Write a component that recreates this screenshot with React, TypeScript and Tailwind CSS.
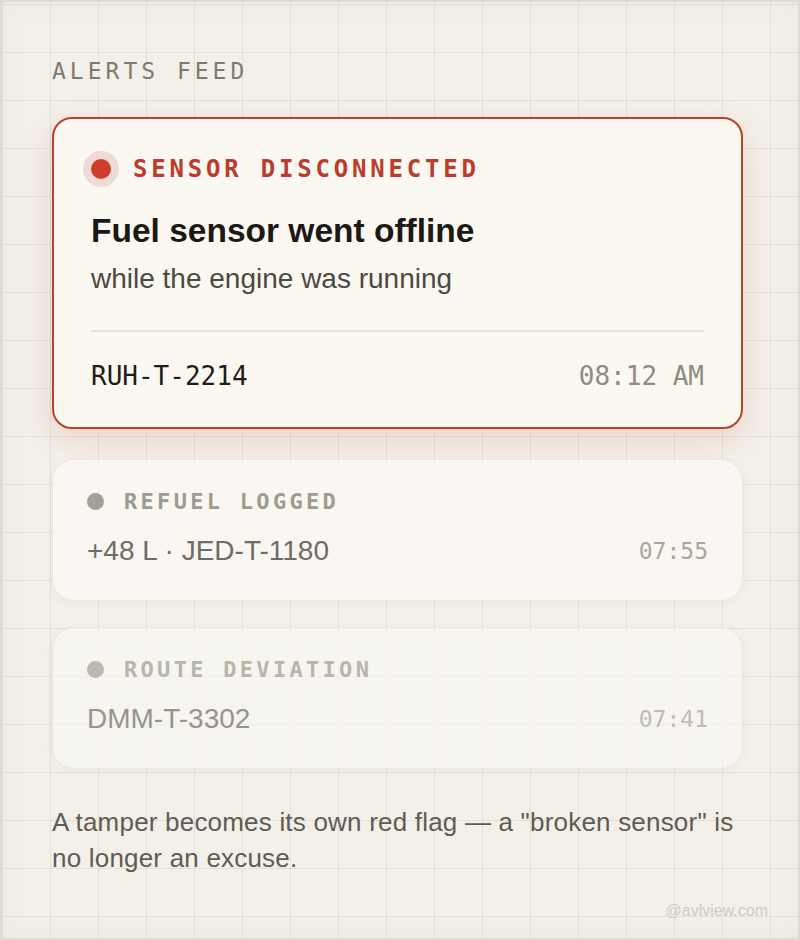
import React from 'react';

const mono = "font-['DejaVu_Sans_Mono','Liberation_Mono',monospace]";
const sans = "font-['Liberation_Sans','Helvetica_Neue',Arial,sans-serif]";

interface FeedItem {
  label: string;
  detail: string;
  time: string;
  faded?: boolean;
}

const quietItems: FeedItem[] = [
  { label: 'REFUEL LOGGED', detail: '+48 L · JED-T-1180', time: '07:55' },
  { label: 'ROUTE DEVIATION', detail: 'DMM-T-3302', time: '07:41', faded: true },
];

function QuietCard({ item }: { item: FeedItem }) {
  return (
    <div
      className={`rounded-[22px] border border-[#ebe7df] px-[34px] pt-[27px] pb-[33px] shadow-[0_2px_10px_rgba(120,110,90,0.06)] ${
        item.faded ? 'bg-[#faf8f3]/60' : 'bg-[#faf8f3]/85'
      }`}
    >
      <div className={item.faded ? 'opacity-70' : ''}>
        <div className="flex items-center gap-[20px] h-[28px]">
          <span className="w-[17px] h-[17px] rounded-full bg-[#a3a196]" />
          <span className={`${mono} text-[22px] font-bold tracking-[3.3px] text-[#9d9b90]`}>
            {item.label}
          </span>
        </div>
        <div className="mt-[20px] flex items-center justify-between h-[32px]">
          <span className={`${sans} text-[28px] text-[#6e6c65]`}>{item.detail}</span>
          <span className={`${mono} text-[23px] text-[#a8a69d]`}>{item.time}</span>
        </div>
      </div>
    </div>
  );
}

export default function App() {
  return (
    <div className="w-[800px] h-[940px] overflow-hidden border-2 border-[#dedbd3] bg-[#f3f0e9] bg-[linear-gradient(to_right,#e3e0d8_1px,transparent_1px),linear-gradient(to_bottom,#e3e0d8_1px,transparent_1px)] bg-[size:48px_48px] bg-[position:0_2px] shadow-[inset_0_0_24px_rgba(150,140,120,0.08)]">
      <div className="pl-[50px] pr-[55px] pt-[54px]">
        <div className={`${mono} text-[23px] leading-[30px] tracking-[4px] text-[#7c7a71]`}>ALERTS FEED</div>

        {/* active alert */}
        <div className="mt-[31px] rounded-[20px] border-2 border-[#b9432f] bg-[#fbf8f2] px-[37px] pt-[32px] pb-[35px] shadow-[0_10px_30px_rgba(210,80,60,0.18)]">
          <div className="flex items-center h-[36px]">
            <span className="w-[20px] h-[20px] rounded-full bg-[#cf3e2a] shadow-[0_0_0_8px_#efdbd5]" />
            <span className={`${mono} ml-[22px] text-[24px] font-bold tracking-[3.8px] text-[#b93c2c]`}>
              SENSOR DISCONNECTED
            </span>
          </div>
          <div className={`${sans} mt-[24px] text-[33.5px] leading-[40px] font-bold text-[#1b1915]`}>
            Fuel sensor went offline
          </div>
          <div className={`${sans} mt-[11px] text-[28px] leading-[34px] text-[#4b4944]`}>
            while the engine was running
          </div>
          <div className="mt-[34px] h-[2px] bg-[#e4e0d8]" />
          <div className="mt-[28px] flex items-center justify-between h-[32px]">
            <span className={`${mono} text-[26px] text-[#1f1d19]`}>RUH-T-2214</span>
            <span className={`${mono} text-[26px] text-[#8e8b83]`}>08:12 AM</span>
          </div>
        </div>

        <div className="mt-[30px] flex flex-col gap-[26px]">
          {quietItems.map((item) => (
            <QuietCard key={item.label} item={item} />
          ))}
        </div>

        <p className={`${sans} mt-[35px] text-[26px] leading-[36px] tracking-[0.2px] text-[#5e5c55]`}>
          A tamper becomes its own red flag — a "broken sensor" is no longer an excuse.
        </p>

        <div className="mt-[23px] flex justify-end">
          <span className={`${sans} mr-[-25px] text-[16px] text-[#cdcbc3]`}>@avlview.com</span>
        </div>
      </div>
    </div>
  );
}
